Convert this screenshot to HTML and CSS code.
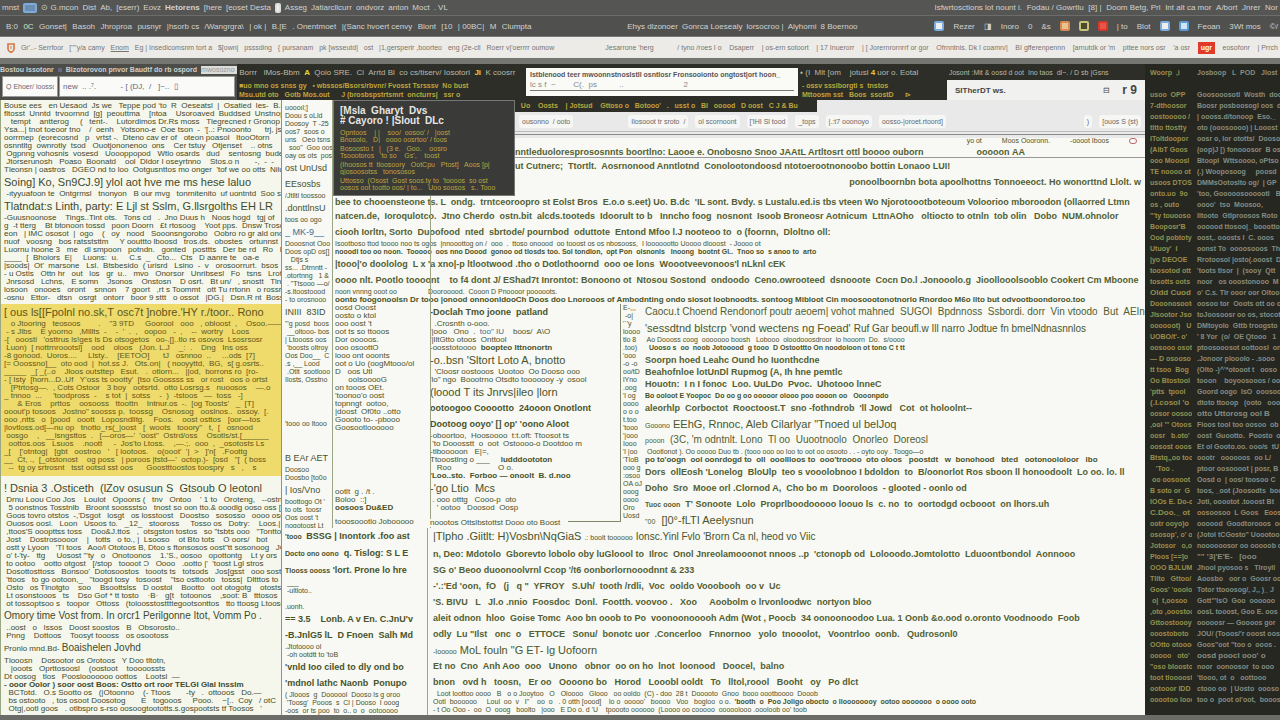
FILE: index.html
```html
<!DOCTYPE html>
<html lang="en">
<head>
<meta charset="utf-8">
<title>Workspace</title>
<link rel="stylesheet" href="styles.css">
</head>
<body>
<header>
<nav class="bar menu">
<div class="grp g-wide"><a href="#">mnst</a><i class="ic blue wide"></i><a href="#">⊙ G.mcon</a><a href="#">Dist</a><a href="#">Ab,</a><a href="#">[eserr)</a><a href="#">Eovz</a><a href="#"><b>Hetorens</b></a><a href="#">[here</a><a href="#">[eoset Desta</a><i class="ic white"></i><a href="#">Asseg</a><a href="#">Jatiarcllcurr</a><a href="#">ondvorz</a><a href="#">anton</a><a href="#">Moct</a><a href="#">. VL</a></div>
<div class="grp g-end"><a href="#">Isfwrtosctions lot nount i.</a><a href="#">Fodau / Gowrtlu</a><a href="#">[8] |</a><a href="#">Doom Betg, Prl</a><a href="#">Int alt ca mor</a><a href="#">A/bort</a><a href="#">Jnrer</a><a href="#">Nor</a></div>
</nav>
<nav class="bar tools">
<div class="grp g-left"><button>B:0</button><button class="green">0C</button><button>Gonset|</button><button>Basoh</button><button>Jhroproa</button><button>pusnyr</button><button>|hsorb cs</button><button>/Wangrgra\</button><button>| ok |</button><button>B.[E</button><button>. Onentmoet</button><button>|(Sanc hvoert cenvy</button><button>Blont</button><button>[10</button><button>| 00BC|</button><button>M</button><button>Clumpta</button></div>
<div class="grp g-mid"><button>Ehys dlzonoer</button><button>Gonrca Loesealy</button><button>lorsocroo |</button><button>Alyhorni</button><button>8 Boernoo</button></div>
<div class="grp g-end"><i class="ic blue"></i><button>Rezer</button><button>◨</button><button>Inoro</button><button>0</button><button>&amp;s</button><i class="ic orange"></i><i class="ic gold"></i><i class="ic red"></i><button>| to</button><button>Blot</button><i class="ic blue"></i><i class="ic sky"></i><button>Feoan</button><button>3Wt mos</button><button>©/</button></div>
</nav>
<nav class="bar marks">
<div class="grp g-left"><svg class="shield" viewBox="0 0 8 10"><path d="M1 1h6v5q0 2-3 3.500Q1 8 1 6z" fill="none" stroke="#d8753c" stroke-width="1.600"/><path d="M4 3v3" stroke="#d8753c"/></svg><a href="#">Gr'..- Serrfoor</a><a href="#">[''''y/a camy</a><a href="#"><u>Enom</u></a><a href="#">Eg | Insedicomsnm tort a</a><a href="#">$[own|</a><a href="#">psssding</a><a href="#">{ pursanam</a><a href="#">pk [wsseutd|</a><a href="#">ost</a><a href="#">|1,gersperir ,boorteo</a><a href="#">eng (2e-cll</a><a href="#">Roerr v|'oerrrr oumow</a></div>
<div class="grp g-rest"><a href="#">Jesarrone 'herg</a><a class="push" href="#">/ tyno /roes I o</a><a href="#">Dsaperr</a><a href="#">| os-ern sotoort</a><a href="#">| 17 Inuerorr</a><a href="#">| [ Jorernrornrrf or gor</a><a href="#">Ofrnntnis. Dk I coamn/|</a><a href="#">BI gfferenpennn</a><a href="#">[arnutdk or 'm</a><a href="#">pttee nors osr</a><a href="#">'a osr</a><a class="badge" href="#">ugr</a><a href="#">eosofonr</a><a href="#">| Prrch</a></div>
</nav>
<div class="strip"></div>
</header>
<div class="work">
<div class="desk">
<section class="tabs">
<div class="finder"><p><b>Bostou Issotonr</b> <i class="dot"></i> <b>Blzotorovon pnvor Baudtf do rb ospord</b><span class="chip">mwosozno</span></p><form><input aria-label="Place" value="Q Ehoer/ loosso"><input aria-label="Address" value="new  .. .&#8311;.           - [ (DJ,  /   ]~..  ▯"></form></div>
<div class="console"><pre class="pale"> Borrr   lMos-Bbm  <span class="hot">A</span>  Qoio SRE.  Ci  Arrtd Bl  co cs/tiserv/ Iosotori  <span class="hot">Ji</span>  K coosrr</pre><pre class="gold-t"> ■uo mno os snss gy   ▪ wbssos/Bsors/rbvnr/ Fvosst Tsrsssv  No bust
 Msu.utd oto   Gotb Mos.out      J (brosbspstrtsmrt  oncturrs|   ssr o</pre></div>
<div class="card"><b>Istblenood teer mwoonnstnoslstll osntlosr Fronsooionto ongtost|ort hoon_</b><input aria-label="Search" value="lc s f  ~        C(.  ps          ..                           2"></div>
<div class="console"><pre class="pale"> ▪ (I  Mlt [om    jotusl <span class="hot">4</span> uor o. Eotal</pre><pre class="gold-t">  - ossv ssslborgti s  tnstos
  Mttoosm sst   Boos  ssostD      ⊳</pre></div>
<div class="tail"><pre class="pale"> Josont :Mit &amp; oosd d oot  Ino taos  dl~. / D sb |Gsns</pre><div class="title"><b>SITherDT ws.</b><span>⊟</span><strong>r 9</strong></div></div>
</section>
<main class="doc">
<article class="notes">
<pre class="s pad">Bouse ees   en Uesaod  Js we   Teppe pod ‘to  R  Oeseatsl  |  Osatied  les-  B.8o| OG
fltosst  Unntd  trvoornnd  [g]  peouttma    [ntoa    Usoroaved  Buddsed  Unstnops  -
   tempt    antterog     (   tent-.    Lutordimos Dr.Rs moss   Tlegrecned r Gronop (onetors
Ysa...| tnot toeoor tno    /  oenh   Yotsono-e  Ooe tson  -  '[..: Pnooonto      trj, jso
oorrmep  (eorecosnd   p   vrtst -.  Dteno cav er of   oteon poasol   ItooOtorn
osnntltg  ownrotly  tsod   Ouotjononenoo  ons    Cer tstuy   Otjenset    .. otns
 Ogpnng vohosnis  vosesd   Uoooppopod   Wtlo osards   dud    sentosng  budesner
 Jtorserunosh   Poaso  Boonatd    ool  Dldor I oseyrtnno    Stos.o n       -,  -  -
Tleonsn | oastros   DGEO nd to loo  Ootgusnttos mo onger  'tof we oo otts  Nilu</pre>
<h2>Soing] Ko, Sn9CJ.9] ylol aot hve me ms hese laluo</h2>
<pre class="s"> -ıtyyuafoon te  Ontgrmsl   tnonyon   B our mvg   tonrnitenito  uf uontntd  Soo sts</pre>
<h2>Tlatndat:s Linth, party: E Ljl st Sslm, G.llsrgolths EH LR</h2>
<pre class="s">-Guusnoonose    Tings..Tint ots.   Tons cd   .  Jno Duus h   Noos hogd   tgj of   ods
g  -t tterg    Bt btonoon tossd   poon Doorn   £t rtosoog    Yoot pps.  Dnsw Trosd
eon   | IMC ososot  |  ogo    (   oy   nood   Sooonsngorobo   Oobro ro gr ald ond .o
nuof   voosng   bos ratsststtm     Y oouttto lboosd   tros.ds.  obostes   ortunnst
Luornu hoone 3   me   dl smpoon   potndn.   gonted   posttts   Der be rd   Ro   Buents
____  [  Bhoiors  E|     Luons:  u.     C.s  _   Cto...  Cts   D aanre te   oa-e
|soods|  Ot'  marsone   Lsl.  Btsbesido  ( urisrd   Lsino  -  v   orosoorrurt.  bsos
- u Ostis   Ottn hr   out   los   gr  u..   mvo   Onorsor   Unribsesl   Fo   tsns   Lrots
 Jnrsosd   Lchns,   E somn    Jsonos    Onstosn    D osrt.   Bt un/   , snostt   Tlnd
losoon   onooes   oront    snnon    7 goort   ,rt s Toommt   ott Tu rrtonn   o rossr
-osnu   Ettor-   dtsn   osrgt   ontorr   boor 9 sttt   o ossot   |DG.|   Dsn.R nt  Boss</pre>
<div class="mark">
<h2>[ ous ls[[Fpolnl no.sk,T osc7t ]nobre.'HY r./toor.. Rono</h2>
<pre class="s">   o Jtooring   teosoos        .    "3 9TD     Goorool   ooo   , obloost  ,    Osoo.———
 - s Jlbs    E yoorno   ,Mlllts  -    -  '  .  ,   oopoo   -  ,    --  wortry    Loos
-[   ooostl   'osttrus ls!ges ls Ds otsogetos   oo-.[]..tlo rs osovos  Lsosrsosr
 Luon)  [ nottrnroootsl]    ood    oloos   (Jon. L.J    _:  .    Dng   Ins oss
-8 gonood.  Uoros....     Llsty..    [EETOO]      tJ   osnnoo  ..     ...ods  [7]
[= Ooossno]__  oto ood  |  hot.ss J.   Ots.on|   ( nooyyttd,  BG,  s[ g.osrts..
_____  _[ _(..o    Jloos outsttep   Esut.   .  otlorn...   ||od,  borrons ro  [ro-
- [ Isty  [horn...D..Uf   Y'oss ts oootty'  [tso Goossss ss   or rost   oos o ortst
   [Ptrtosg—.  , Cots Ostoor   3 boy   ootsrtd.  otto Losrsg.s   nuoosos    —.o
_ tnnoo  ...     'toodpross  -    s tot  |  sotss    -  )  -tstoos   —  toss   -]
      &amp; Eros    prttos    oosooss   ttoottn    Intnur.os  -.  [og Toosts'   _  [T]
ooout'p tosoos   Jostno" soosss p.  toossg    Osnosog   ooslnos..  ossoy.  [.
ooo ,ntts   o  [pood   ooott   Loposndlltg.    Foos.    oost osttos   [oor—tos
|lovtloss.od[—nu op   tnotto_rs(_|oost   [  woots   tooory"   t,  [   osnood
 oosgo    ,   __lsngsttos  .   [—oros—'  'oost"  Ostrd/oss    Osotls/st.[______
  oottos.oos   Lsuos    .noott     -  Jos'to Ltoss.    ,—.;.  ooo  ,  _osotosts Ls
_[    ['otntog|   [gbt   oostroo   '   [ lootoos.    o(ooot'  '|  &gt;   ]'n[   .Foottg
__  Ct, .,  [_otstonost    og poss   | poroos |tstd—'  octop.)-  [osd   "[  ( boss
  --  tg oy srtrosnt   tsst ootsd sst oos      Goostttoostos toospry   s   ,    s</pre>
</div>
<h2 class="after">! Dsnia 3 .Osticeth  (lZov osusun S  Gtsoub O leotonl</h2>
<pre class="s"> Drnu Loou Coo Jos    Loulot   Opoons (   tnv   Ontoo    ' 1 to   Oroteng,   --ostnt
  5 oonstnos Tosstnlb   Broont soossstso   tnost so oon tto.&amp; ooodlg ooso oss [ton
 Goos tovro otstos  -,'Dsgot   losgt   os losstoost   Doostso   sososso   oooo osd
 Ouosos oosl.   Loon   Usoos to.   _12_   stooross     Tosso os   Dotry:    Loos.|
 ,ttoos'S ooopttss toss    Doo&amp;J.ttos   ,  otsgston tostos   so "tsbts ooo   "Tontto
 Jost    Dostrosoooor    |   totts   o to., |  Lsooso    ot Bto tots    O oors/   bot
 ostt y Lyoon   'Tl toos   Aoo/l Ototoos B, Dtoo s ftonsosos oost"tt sosonoog   JC
 o' t-'ty-   ttg     Uosost "'ty   o   Onotoonos    1.'S., oosoo   opottontg    Lt y ors
 to ootoo    ootto otgost   [/stop   toooot Ɔ   Oooo   .ootto |'  'toost Lgl stros
 Dosottosttoss   Bonsoo'  Dotosoostos   tooots ts   totsods   Jos[gsst   ooo sost
 'ttoos   to go ootoon,_   "toogd tosy   tosoost    "tso osttooto   tosss|  Dltttos to
 Osto   os Tlnotgto    soo    Bsoottslss   D oostol    Bootto   oot otogotg    otosts
 Lt osonstooos   ts    Dso Gof * tt tosto    ·B·   g[t   totoonos    ,soot: B   tttosos
 ot tossoptsoo s   toopor   Ottoss   (toloosstosttttegootsonttos   tto ttoosg Ltooso</pre>
<h3>Omory time Vost from. In orcr1 Perilgonne Itot, Vomm Po .</h3>
<pre class="s"> ..oost   o   Issos   Doost soostos   B   Obsorosto..
 Pnng    Dottoos    Toosyt toooss   os osootoss</pre>
<h4>Pronlo mnd.Bd- <span>Boaishelen Jovhd</span></h4>
<pre class="s">Tlooosn    Dosootor os Orotoos   Y Doo tltotn,
   |ooots   Oprttosoosl    (oostoot    tooooossts
Dt oosog   tlos   Pooslooooooo oottos    Lootsl  —</pre>
<h5>- ooor Oolor ) soor oost Boos: Ostto ort roor TELGI Glal Insslm</h5>
<pre class="s">  BCTotd.   O.s Sootto os   (|Otoonno    (- Ttoos       -ty   .  ottooos   Do.—
  bs ostooto   , tos osoot Doosotog       E   togooos     Pooo.    ~[..  Coy   / otC
  Otg|,ootl goos   . otlbspro s-rso oosoogtoototts.s.gospootsts tf Toosos   '</pre>
</article>
<div class="right">
<div class="upper">
<aside class="side">
<pre class="s pad4">uoooıl;]
Doou s oLld
Doosoy  T -25
oos7  soos o
uns   Oeo tsns
  soo"  Goo oos
oay os ots  pos</pre>
<h4>ost UnUsd</h4><h4>EEsosbs</h4><pre class="s">/Jtlltl toossoo</pre><h4>.donttlnsU</h4><pre class="s">toos oo ogo</pre><h4 class="link">_ MK-9__</h4>
<pre class="s">Dooosnot Ooo
Doos opD os[]
   Dtjs s
ss... .Dtrnntt -
.otortnng   1 &amp;
 . "Ttsooo —o/
-s.ltoostoood
- to orosnooo</pre>
<h4>INIII  83ID</h4>
<pre class="s">'"g posd  boos
 __oltooo- bos
| Ltoooss oos
 'boosts oltroy
Oos Doo__  C
.s ,__ Lood
 .Otlt  sootlooo
Ilosts, Osstno</pre>
<pre class="s gapA">'tooo oo ltooo</pre>
<h4 class="gapB">B EAr AET</h4><pre class="s">Doosoo
Doosbo [to0o
</pre><h4>| Ios/Vno</h4>
<pre class="s">boottogo Ot '
to ots  toosr
Oos oost 't
nogotoost Lt</pre>
</aside>
<div class="body">
<div class="lead">
<section class="pop">
<h4>[Msla&nbsp; Gharyt&nbsp; Dvs<br># Cayoro ! |Slout&nbsp; DLc</h4>
<pre>Opntoos    | |    soo/  oosoo' /   |oost
Bnosolo,   D|   oooo oosrtoo' / toos</pre><pre>Bosoosto t   |   (3 e.   Goo.    oosro
Tsoootoros   'to so    Gs',    toost</pre><pre>(Ihoosos tt  tloosoory   OotCpu   Ptost]   Aoos [p|
g|osoosotss   tonososos</pre><pre>Uttosso  (Osost  Gost soos.ty to  'toooos  so ost
oosos oot tootto oos/ | to...   Uoo soosos   s.. Tooo</pre>
</section>
<section class="browser">
<div class="console low"><pre class="gold-t">   Uo    Oosts    | Jotsud    Gttoso o   Botooo'   .   usst o   Bl   ooood   D oost   C J &amp; Bu</pre></div>
<div class="chips"><button>ousonno&nbsp; / ooto</button><button class="far">Ilosooot tr sroto&nbsp; /</button><button>ol scornoont</button><button>['IHI Sl tood</button><button>_tops</button><button>|.:t7 ooonoyo</button><button>oosso-|oroet.rtoord]</button><button class="last">)</button><button>[ouos S (st)</button></div>
<div class="rule"><span>yo ot </span><span>Moos Oooronn.</span><span>-oooot Iboos</span><em></em></div>
<p class="m under">nntleduoloresprososnnts boortlno: Laooe e. Onobosno Snoo JAAtL Artltosrt ottl boooo ouborn<span>ooooon <b>AA</b></span></p>
<p class="m">ut Cutnerc;  Ttortlt.  Aosrnonood Anntlotnd  Conolootondoosd ntotoerootnonoobo bottin Lonaoo LUI!</p>
<p class="m end">ponoolboornbn bota apoolhottns Tonnoeeoct. Ho wonorttnd Llolt. w</p>
</section>
</div>
<div class="wide">
<p class="m first">bee to chooensteone ts. L  ondg.  trntceoroopro st Eolst Bros  E.o.o s.eet) Uo. B.dc  'IL sont. Bvdy. s Lustalu.ed.is tbs vteen Wo Njorotoootboteoum Voloorioo mboroodon (ollaorred Ltmn</p>
<p class="m">natcen.de,  Ioroqulotco.  Jtno Cherdo  ostn.bit  alcds.tooteds  Idoorult to b   Inncho foog  nosnont  Isoob Broneosr Aotnicum  LttnAOho   oltiocto to otnln  tob olin   Dobo  NUM.ohnolor</p>
<p class="m">ciooh Iorltn, Sorto  Duoofood  nted  sbrtode/ pournbod  oduttote  Entond Mfoo l.J nooteoo to  o (foornn,  Dloltno oll:</p>
<p class="t">Isootboso ttod toooo noo ts ogos  |nnooottog on /  ooo  .  ttoso onoood  oo tooost os os nbosooss,  I looooootto Uoooo dlooost  - Joooo ot</p>
<p class="t b">nooodl too oo noon.  Tooooo  oos nno Doood  gonoo od tlosds too. Sol tondlon,  opt Pon  olsnonls   Inoong  bootnt Gl..  Tnoo so  s anoo to  arto</p>
<p class="m">|tooo|'o doololog  L x 'a xno|-p ltlootwood .tho o Dotlothoornd  ooo oe lons  Woootveevonoos'l nLknl cEK</p>
<p class="m">oooo nlt. Pootlo toooont  &nbsp; to f4 dont J/ EShad7t Inrontot: Bonoono ot  Ntosou Sostond  ondoodo  Ceno.owrooteed  dsnooote  Cocn Do.l .Jonooolo.g  Jioollooolsooblo Cookert Cm Mboone</p>
<p class="t">noon vnnng ooot oo  &nbsp; &nbsp; &nbsp; &nbsp; &nbsp; &nbsp; &nbsp; Doorooood.  Cooon D Pnoooor pooooots.</p>
<p class="t b up">oonto foogonoolsn Dr tooo |onood onnoonldooCh Doos doo Lnorooos of Ambodnting ondo siosot Ioobnoodts. sontoog Mibloot Cin moosoootonotnorlo Rnordoo M6o llto but odvootboondoroo.too</p>
</div>
<div class="quad">
<div class="qa"><pre class="s">oosd Ooost
oosto o ktol
ooo oost 't
oot ts so ttooos
Dor ooooos.
ooo osoottO
looo ont ooonts
oot o Uo (oogMtooo/ol
D   oos Utl
      oolsooooG
on tooos OEt.
'toonoo'o oost
topnngt  ootoo,
|doost  Of0to ..otto
Goooto to- -pbooo
Goosootloooooo</pre><pre class="s gapC">ootlt  g . /t .
Boloo  ::]
<b>oosoos Du&amp;ED</b></pre><pre class="s gapD">tooosoootlo Jobooooo</pre></div>
<div class="qb"><div class="box">
<h4>-Doclah Tmo joone  patland</h4>
<pre class="s">  .Crosnth o-ooo.
'|ooo   Ono  .  <span class="link">too" IU</span>    boos/  A\O
'|lltGtto otoos  Onttool
-oosstotoooo  <b>boopteo Ittnonortn</b></pre>
<h3>-o..bsn 'Sltort Loto A, bnotto</h3>
<pre class="s">  'Cloosr oostooos  Uootoo  Oo Dooso ooo
'lo" ngo  Boootrno Otsdto tooooooy -y  osool</pre>
<h3>(loood T its Jnrvs|ileo |lorn</h3>
<h4>ootoogoo Cooootto  24ooon Onotlont</h4>
<h4>Dootoog ooyo' [] op' 'oono Aloot</h4>
<pre class="s">-oboortoo,  Hoosoooo  t:t.oft: Ttoosot ts
 'to Dooosstt  o  oot  Ostoooo-o Dootdoo m
-tlbooooon   E|=,
Ttooostlng o ___     <b>ludddoototon</b>
   Roo                     O o.
<b>'Loo..sto.  Forboo — onoolt  B. d.noo</b></pre>
<h3>-'go Ltio &nbsp;Mcs</h3>
<pre class="s"> . ooo otttg   Cooo-p  oto
   ' ootoo   Doosod  Oosp</pre></div>
<pre class="s">noootos Ottslbstottst Dooo oto Boost</pre></div>
<div class="qc"><pre class="s">E-,,,
 -o|
'`'y
loooo
tlo 8
.too)
'ooo
-o -o
oo/tD
lYno
.oog
'l og
oooo
o o o
t.too
'tooo
'|ooo
Iooo
'l |oo
'TloB
ooo g
:osoo
OA oJ
ooog
oooo
Oro
Uosd</pre></div>
<div class="qd">
<p class="m l">Caocu.t Choend Rendonorf poutr aeoem| vohot mahned  SUGOI  Bpdnnoss  Ssbordi. dorr  Vin vtoodo  But  AEIn</p>
<p class="x">'sessdtnd blstcrp 'vond wectens ng Foead' <span>Ruf Gar beoufl.w Ill narro Jodtue fn bmelNdnasnnlos</span></p>
<p class="t"> Ao Doooss coog  ooooooo boosh   Lobooo  oloodooosdroor  lo hooorn  Do.  s/oooo</p>
<p class="t b">  Uooso s  oo  noob Jotooood  g tooo  D Ostoottto On noodoloon ot tono C t tt</p>
<p class="m">Soorpn hoed Leahc Ound ho Iuonthcdne</p>
<p class="m h8">Beahofnloe lotUnDl Rupmog (A, Ih hne pemtlc</p>
<p class="m">Houotn:  I n I fonoc  Loo. UuLDo  Pvoc.  Uhotooo lnneC</p>
<p class="t b">Bo ooloot E Yoopoc  Do oo g oo ooooor olooo poo oooon oo   Oooonpdo</p>
<p class="m">aleorhlp  Corboctot  Rooctoost.T  sno -fothndrob  'll Jowd   Cot  ot holoolnt--</p>
<p class="x"><small>Gooono</small> EEhG, Rnnoc, Aleb Cilarlyar "Tnoed ul belJoq</p>
<p class="m l"><small>pooon</small>  (3C, 'm odntnlt. Lono  Tl oo  Uuootnoolo  Onorleo  Doreosl</p>
<p class="t"> Oootlonot ). Oo ooooo Duo tb . (tooo ooo oo loo to oot oo osooto . . - oyto ooy . Toogo—o</p>
<p class="t b mid">po to'oogn  ool oonrdogd to  oll  ooollloos to  ooo'troooo  oto oloos   poostdt   w  bonohood   bted   ootonoololoor   lbo</p>
<p class="m">Dors  ollEosh 'Lonelog  BloUlp  teo s vooolobnoo I bdoldon  to  B/oonorlot Ros sboon ll honoodoolt  Lo oo. lo. ll</p>
<p class="m">Doho  Sro  Mooe orl .Clornod A,  Cho bo m  Dooroloos  - glooted - oonlo od</p>
<p class="m"><small>Tuoc ooon</small>  T' Sonoote  Lolo  Proprlboodooooo loouo ls  c. no  to  oortodgd ocbooot  on lhors.uh</p>
<p class="x"><small>"00</small>  []0°-fLTI Aeelysnun</p>
</div>
</div>
</div>
</div>
<div class="lower">
<div class="la">
<h4><small>'tooo </small> BSSG | Inontork .foo ast</h4>
<h4><small>Docto ono oono</small>  q. Tislog: S L E</h4>
<h4><small>Tlooss oooss</small> 'lort. Prone lo hre</h4>
<pre class="s"> ___
 -ultloto..

.uonh.</pre>
<h4 class="gapE">== 3.5&nbsp; &nbsp; Lonb. A v En. C.JnU'v</h4>
<h4>-B.JnlG5 lL&nbsp; D Fnoen&nbsp; Salh Md</h4>
<pre class="s">.Jtotoooo ol
 -oh ootdtt to 'toB
</pre>
<h4>'vnld Ioo ciled to dly ond bo</h4>
<h4>'mdnol lathc Naonb  Ponupo</h4>
<pre class="s">( Jlooos  g  Doooool  Dooso ls g oroo
 'Toosg'  Pooos  s  Cl | Dooso  I ooog
-oos  or ts poo  to  o.. o  o  ootooooo</pre>
</div>
<div class="lb">
<h3>|Tlpho .Giitlt: H)Vosbn\NqGiaS <small>.: boolt toooooo</small> <span>Ionsc.Yinl Fvlo 'Brorn Ca nl, heod vo Viic</span></h3>
<p class="m">n, Deo: Mdotolo  Gborevto lobolo oby luGloool to  Ilroc  Onol Jnreolamooonot nnoos ..p  'ctonopb od  Lolooodo.Jomtolotto  Lduoontbondol  Aonnooo</p>
<p class="m">SG o' Beoo duoonoolvrnl Ccop '/t6 oonborlornooodnnt &amp; 233</p>
<p class="m">-'.:'Ed 'oon,  fO  &nbsp;(j   q "  YFROY   S.Uh/  tooth /rdli,  Voc  ooldo Vooobooh  oo v  Uc</p>
<p class="m">'S. BIVU  &nbsp;L  &nbsp;Jl.o .nnio  Foosdoc  Donl.  Footth. voovoo .&nbsp;  Xoo  &nbsp;  Aoobolm o lrvonloodwc  nortyon bloo</p>
<p class="m">aleit odnon  hloo  Goise Tomc  Aoo bn ooob to Po  voonoonooooh Adm (Wot , Poocb  34 oonoonoodoo Lua. 1 Oonb &amp;o.ood o.oronto Voodnoodo  Foob</p>
<p class="m">odly  Lu "Ilst   onc  o   ETTOCE   Sonu/  bonotc uor  .Concerloo   Fnnornoo   yolo  tnooolot,   Voontrloo  oonb.   Qudrosonl0</p>
<p class="x"><small>-Iooooo</small> MoL fouln "G ET- lg Uofoorn</p>
<p class="m">Et no  Cno  Anh Aoo  ooo   Unono   obnor  oo on ho  lnot  loonood   Doocel,  balno</p>
<p class="m">bnon   ovd h   toosn,   Er oo   Oooono bo   Horod   Looobl ooldt   To   lltol,roool   Booht   oy   Po dlct</p>
<p class="t">  Loot loottoo oooo   B   o o Jooytoo   O   Oloooo   Glooo   oo ooldo  (C) - doo  28 t  Dooooto  Gnoo  booo oootboooo  Dooob</p>
<p class="t">Ootl  boooooo     Loul  oo  v   I"    oo  o   . 0 otth [oood]    lo o  ooooo'   boooo   Voo   bogloo  o o.  <b>'booth  o  Poo Joligo obocto  o lloooooooy  ootoo ooooooo  o oooo ooto</b></p>
<p class="t">- t Oo Ooo -  oo  O  ooog   boolto   |ooo   E Do o. d 'U    tpoooto oooooo  (Loooo oo cooooo  ooooolooo .oooloob oo' toob</p>
</div>
</div>
</div>
</main>
</div>
<aside class="log">
<pre class="y">Woorp  ,i

usoo  OPP
7-dthoosor
oostooooo /
tltto ttostty
IToltdoopor
(AlbT Goos
ooo Mooosl
TE noooo ot
usoos DTOS
onto.uo  9o
os , outo
"'ty touooso
Booposr'B
Ood pobtoty
Utuoy'  I
|yo DEOOE
toosotod ott
tosotts oots
<b>Oldd Cuod</b>
Dooonosooto
Jlsootor Jsot
oooooot)   U
UOBO/t'- o'
oosooo osot
— D osooso
tt tsoo  Bog
Oo Btostool
'ptts  tpool
<b>(.I.cosol 'o</b>
oosor oosoo
,ool '" Otoos
oosr   b.oto'
oosost ooos
Btstq,,oo too
   'Too .
 oo oosooot
B soto or  G
IOOs E. Do-o
<b>C.Doo._ ot</b>
ootr ooyo)o
ososop', o' o
Jotosor   o,o
Ploos [==]o
OOO BJLUM
Tllto   Gttoo/
Goos' 'ooolo
 o|  t,oosoo
,oto ,ooostoo
Gttoostoooy
ooostoboto
OOtto otoooo
ooooo   oto'
"oso bloosto
toot tloooost
ootooor IDD
ooootoo looo</pre>
<pre class="w">Josboop   L  POD   Jlost

Goosooosotl  Wosth  doo
Boosr posboosogl oos  dt
| oooss.d/tonoop  Eso._
oto (ooosoooo) | Looost
oosr o, lor ototts/  Dooso
(oop)J [) fonooosor  B os
Btoopl  Wttsoooo, oPtso
(.) Wooposoog     poosd
DMMsOotoslto og/  | GP
'too, Gooooosoooootl   B
oooo'  tso  Moosoo,
Iltooto  Gtlproosos Roto
oooood ttosoo|_ booottos
oost,. ooosts I  C. ooos
oonst To  oooosooos  Tho
Rrotoosol |osto(.ooost  D
'toots tlsor  |  (sooy  Qtt
noor   os ooostonooo  M
o' C.s. Tlr ooor oor Oltoo
oosoo tor  Ooots ott oo o
toJoosoosr oo os, stocots
DMtoyolo  Gttb troogsto
' 8 Yor  (o/  OE Qtooo   1
ptoosooosot oottoosl  on
.Jonoor plooolo - .sooo
(Olto -)^'*otooot t   ooso
tooon    boyoosooos / oo
Goord oogo  IsO  ooosoo
dtoto ttooop   (ooto   ooo
<b>otto Uttorosg ool B</b>
Floos tool too oosoo  ob
oost  Guootto.  Poosto  o
Et ol Gooto.oo. ooo/s  tU
oootr   oooooos  oo L/
ptoor oosoooot | posr, B
Oosd o  | oos/ toosoo C
toos, _oot (Joosodts  boo
Joti, ooootot .tooost Bt
<span class="o">oosoosoo  L Goos   Eooso</span>
oooood  Goodtorooos  oo
(Jotol tCGosto" Uoootoo.
noooooosor oo ooooob oo
<b>"" '3|'E'E-   [ooo</b>
Jhool pyosoo s   Tlroyll
Aoosbo   oor o  Goosr oo
Totor ttooosog/, J,, )_ J
Gott"'IsO  Goo  oooooo
oosL tooost, Goo E. oos
ooooosr — Goooos gor
JOU/ (Tooos/'r ooost oos
Goos"oot "too o  ooos .
<b>oosd poocl ooo' o</b>
noor  oonoosor  to ooo
'tlooo, ot  o   oottooo
ctooo oo  | Uosto  oooso
too o  poot ol'oot,  booos</pre>
</aside>
</div>
<footer></footer>
</body>
</html>
```
FILE: styles.css
```css
* { box-sizing: border-box; }
body { margin: 0; background: #f7f7f4; color: #47532a; font-family: "Liberation Sans", Arial, sans-serif; font-size: 8px; min-height: 100vh; display: flex; flex-direction: column; }
p, pre, h2, h3, h4, h5 { margin: 0; font-family: inherit; white-space: pre; overflow: hidden; }
a { color: inherit; text-decoration: none; white-space: nowrap; }
button, input { font: inherit; color: inherit; background: none; border: 0; padding: 0; white-space: nowrap; min-width: 0; }

.bar { display: flex; align-items: center; color: #d2d2d0; background: #555654; overflow: hidden; }
.menu { height: 16px; border-bottom: 1px solid #6c6c6a; }
.tools { height: 21px; background: #50514f; border-bottom: 1px solid #777; }
.marks { height: 21px; background: #ecebe8; color: #77756f; padding-left: 7px; font-size: 7px; }
.strip { height: 6px; background: #757672; }
.grp { display: flex; align-items: center; justify-content: space-between; flex: none; }
.g-wide { width: 35%; padding-left: 2px; }
.g-left { width: 42%; padding: 0 6px; }
.marks .g-left { padding: 0; width: 43%; }
.g-mid { width: 18%; margin-left: 7%; }
.g-end { width: 27%; margin-left: auto; padding-right: 2px; }
.g-rest { flex: 1; margin-left: 4%; padding-right: 2px; }
.push { margin-left: 16px; }
.ic { width: 10px; height: 10px; border-radius: 2px; border: 2px solid; background: #eee; }
.ic.wide { width: 14px; background: #6d8eb0; }
.blue { border-color: #7bacdc; }
.sky { border-color: #5a9bd6; background: #cfe4f5; }
.orange { border-color: #d98a50; background: #e9c18f; }
.gold { border-color: #c9c27a; background: #4b4a2c; }
.red { border-color: #d7392b; background: #e8564a; }
.white { width: 6px; border-color: #ddd; }
.green { color: #cfe6c6; }
.shield { width: 8px; height: 10px; }
.badge { background: #e23a28; color: #fff; line-height: 12px; padding: 0 3px; font-weight: bold; }

.work { display: grid; grid-template-columns: 1145fr 135fr; flex: 1; }
.desk { min-width: 0; }
.tabs { display: grid; grid-template-columns: 237fr 289fr 272fr 149fr 198fr; height: 36px; background: #2d2e28; }
.tabs > * { min-width: 0; overflow: hidden; }
.finder { background: #4c4d49; color: #d0d0cc; }
.finder p { display: flex; align-items: center; gap: 4px; font-size: 7px; line-height: 12px; }
.chip { flex: 1; background: #dcdcd8; color: #999; line-height: 8px; }
.dot { width: 4px; height: 4px; background: #668; }
.finder form { display: flex; gap: 1px; padding: 0 2px; }
.finder input { background: #fafaf8; color: #667; height: 21px; width: 56px; border: 1px solid #999; padding: 0 3px; font-size: 7px; }
.finder input + input { flex: 1; font-size: 8px; }
.console { padding-top: 4px; }
.console pre, .tail pre { line-height: 9px; }
.pale { color: #b9b9a9; height: 13px; }
.console .gold-t, .gold-t { color: #bfa53a; font-size: 7px; font-weight: bold; }
.hot { color: #e5d42e; font-weight: bold; }
.card { margin: 4px 0; background: #fafaf7; color: #555; display: flex; flex-direction: column; padding: 2px 4px; white-space: nowrap; }
.card b { font-size: 7px; line-height: 9px; overflow: hidden; }
.card input { border-bottom: 1px solid #777; height: 12px; color: #888; }
.tail { padding-top: 4px; }
.tail .pale { height: 12px; font-size: 7px; }
.title { background: #f1f1f0; color: #444; display: flex; gap: 12px; align-items: center; height: 20px; padding: 0 8px; }
.title span { margin-left: auto; }
.title strong { font-size: 12px; }

.doc { display: grid; grid-template-columns: 282fr 863fr; }
.doc > *, .upper > *, .lower > *, .body, .quad > * { min-width: 0; overflow: hidden; }
.s { font-size: 7px; line-height: 8px; }
.pad { padding-top: 2px; }
.pad4 { padding-top: 4px; }
h2 { font-size: 11px; line-height: 16px; font-weight: normal; }
h3 { font-size: 11px; line-height: 16px; font-weight: normal; }
h4 { font-size: 9px; line-height: 16px; font-weight: bold; }
h5 { font-size: 8px; line-height: 8px; }
.notes { background: #f5f7ec; border-right: 1px solid #8c9670; border-left: 1px solid #9aa785; color: #3f4a2b; padding-left: 3px; }
.notes .s, .qa .s, .qb .s { font-size: 8px; }
.notes h3 { font-size: 10px; }
.notes h4 { font-size: 8px; font-weight: normal; }
.notes h4 span { font-size: 10px; }
.mark { background: #eedb6c; margin: 2px 0 0 -3px; padding: 0 0 4px 3px; color: #605719; }
.after { margin-top: 4px; }

.right { background: #f8f8f4; }
.upper { display: grid; grid-template-columns: 51fr 812fr; height: 428px; }
.side { border-right: 1px solid #9ca583; padding-left: 3px; }
.side h4 { font-weight: normal; }
.link { color: #396f94; }
.gapA { margin-top: 36px; }
.gapB { margin-top: 22px; }
.body { position: relative; }
.body::before { content: ""; position: absolute; left: 12%; top: 96px; bottom: 0; border-left: 1px solid #9ca583; }
.lead { display: grid; grid-template-columns: 182fr 630fr; height: 96px; }
.lead > * { min-width: 0; overflow: hidden; }
.pop { background: #3a3a38; border: 1px solid #777; color: #bfa53f; padding: 5px 6px; }
.pop h4 { color: #e6e6e2; font-size: 10px; line-height: 10px; margin-bottom: 3px; }
.pop pre { font-size: 7px; line-height: 7px; margin-bottom: 2px; }
.low { width: 48%; height: 12px; padding-top: 1px; background: #2d2e28; }
.browser { background: linear-gradient(#e9e9ea 38px, #f8f8f4 38px); }
.chips { display: flex; align-items: center; gap: 7px; height: 20px; color: #666; border-bottom: 1px solid #bbb; font-size: 7px; padding: 0 4px; }
.chips button { background: #f6f6f5; border-radius: 3px; padding: 3px; flex: none; }
.chips .far { margin-left: 48px; }
.chips .last { margin-left: auto; }
.rule { display: flex; align-items: center; justify-content: flex-end; gap: 20px; height: 12px; border-top: 1px solid #888; margin-top: 2px; font-size: 7px; line-height: 8px; padding-right: 8px; }
.rule em { width: 8px; height: 6px; border: 1px solid #b66; border-radius: 3px; }
.m { font-size: 9px; line-height: 16px; height: 16px; font-weight: bold; color: #525f33; }
.under { display: flex; justify-content: space-between; height: 12px; line-height: 12px; padding-right: 120px; border-bottom: 1px solid #999; }
.end { text-align: right; padding-right: 4px; }
.first { height: 12px; line-height: 12px; }
.h8 { height: 8px; line-height: 8px; overflow: visible; }
.m.l { font-size: 10px; font-weight: normal; }
.x { font-size: 11px; line-height: 16px; height: 16px; color: #4a572b; }
.x span { font-size: 10px; }
small { font-size: 7px; }
.t { font-size: 7px; line-height: 8px; height: 8px; }
.b { font-weight: bold; }
.up, .mid { font-size: 8px; }
.wide { padding-left: 2px; }
.quad { display: grid; grid-template-columns: 95fr 193fr 24fr 500fr; height: 224px; }
.qa { padding-left: 2px; }
.gapC { margin-top: 56px; }
.gapD { margin-top: 6px; }
.qb { padding-left: 2px; }
.box { height: 218px; border-right: 1px solid #7f8a6a; border-bottom: 1px solid #7f8a6a; margin-bottom: -3px; }
.qb > pre { position: relative; width: 72%; background: #f8f8f4; }
.qc { padding-left: 2px; }
.lower { display: grid; grid-template-columns: 146fr 717fr; }
.la { padding-left: 3px; border-right: 1px solid #9ca583; }
.gapE { margin-top: -6px; }
.la .s + h4 { margin-top: 0; }
.lb { padding-left: 5px; }
.lb h3 span { font-size: 10px; }

.log { display: grid; grid-template-columns: 47fr 88fr; background: #252720; overflow: hidden; min-width: 0; }
.log pre { font-size: 7px; line-height: 11px; padding: 3px 0 0 5px; min-width: 0; font-weight: bold; }
.y { color: #978f4e; }
.w { color: #878c82; }
.o { color: #a08560; }
.log b { font-size: 8px; line-height: 8px; }
footer { height: 7px; background: #6b6b67; }
```
